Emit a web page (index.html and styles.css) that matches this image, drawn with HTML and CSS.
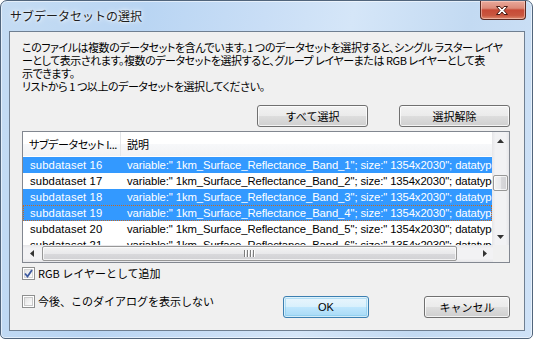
FILE: index.html
```html
<!DOCTYPE html>
<html lang="ja">
<head>
<meta charset="utf-8">
<title>サブデータセットの選択</title>
<link rel="stylesheet" href="styles.css">
</head>
<body>
<div class="window">
  <div class="titlebar">
    <span class="title">サブデータセットの選択</span>
    <div class="close">
      <svg width="46" height="19" viewBox="0 0 46 19">
        <path d="M17.5 5.5 L21 5.5 L23 8 L25 5.5 L28.5 5.5 L25 9.5 L28.5 13.5 L25 13.5 L23 11 L21 13.5 L17.5 13.5 L21 9.5 Z" fill="#ffffff" stroke="#4a1a12" stroke-width="1" stroke-linejoin="round"/>
      </svg>
    </div>
  </div>
  <div class="client">
    <p class="intro">このファイルは複数のデータセットを含んでいます。1 つのデータセットを選択すると、シングル ラスター レイヤ<br>ーとして表示されます。複数のデータセットを選択すると、グループ レイヤーまたは RGB レイヤーとして表<br>示できます。<br>リストから 1 つ以上のデータセットを選択してください。</p>
    <div class="top-buttons">
      <button class="btn wide">すべて選択</button>
      <button class="btn wide">選択解除</button>
    </div>
    <div class="list">
      <div class="list-main">
        <div class="list-view">
          <div class="header">
            <div class="hcell c1">サブデータセット I...</div>
            <div class="hcell c2">説明</div>
          </div>
          <div class="rows">
            <div class="row sel"><div class="cell c1">subdataset 16</div><div class="cell c2">variable:" 1km_Surface_Reflectance_Band_1"; size:" 1354x2030"; datatype</div></div>
            <div class="row"><div class="cell c1">subdataset 17</div><div class="cell c2">variable:" 1km_Surface_Reflectance_Band_2"; size:" 1354x2030"; datatype</div></div>
            <div class="row sel"><div class="cell c1">subdataset 18</div><div class="cell c2">variable:" 1km_Surface_Reflectance_Band_3"; size:" 1354x2030"; datatype</div></div>
            <div class="row sel focus"><div class="cell c1">subdataset 19</div><div class="cell c2">variable:" 1km_Surface_Reflectance_Band_4"; size:" 1354x2030"; datatype</div></div>
            <div class="row"><div class="cell c1">subdataset 20</div><div class="cell c2">variable:" 1km_Surface_Reflectance_Band_5"; size:" 1354x2030"; datatype</div></div>
            <div class="row"><div class="cell c1">subdataset 21</div><div class="cell c2">variable:" 1km_Surface_Reflectance_Band_6"; size:" 1354x2030"; datatype</div></div>
          </div>
        </div>
        <div class="vscroll">
          <div class="arrow up"><svg width="7" height="4" viewBox="0 0 7 4"><path d="M0 4 L3.5 0 L7 4 Z" fill="#333"/></svg></div>
          <div class="vtrack">
            <div class="vthumb"></div>
          </div>
          <div class="arrow down"><svg width="7" height="4" viewBox="0 0 7 4"><path d="M0 0 L7 0 L3.5 4 Z" fill="#333"/></svg></div>
        </div>
      </div>
      <div class="hscroll-row">
        <div class="hscroll">
          <div class="arrow left"><svg width="4" height="7" viewBox="0 0 4 7"><path d="M4 0 L4 7 L0 3.5 Z" fill="#333"/></svg></div>
          <div class="htrack">
            <div class="hthumb"><span class="grip"></span><span class="grip"></span><span class="grip"></span><span class="grip"></span></div>
          </div>
          <div class="arrow right"><svg width="4" height="7" viewBox="0 0 4 7"><path d="M0 0 L4 3.5 L0 7 Z" fill="#333"/></svg></div>
        </div>
        <div class="corner"></div>
      </div>
    </div>
    <div class="bottom">
      <label class="check first"><span class="box checked"><svg width="9" height="9" viewBox="0 0 9 9"><path d="M1 4.5 L3.5 7.5 L8 1" fill="none" stroke="#3d5aa0" stroke-width="1.8"/></svg></span>RGB レイヤーとして追加</label>
      <div class="last-row">
        <label class="check"><span class="box"></span>今後、このダイアログを表示しない</label>
        <button class="btn small default">OK</button>
        <button class="btn small">キャンセル</button>
      </div>
    </div>
  </div>
</div>
</body>
</html>
```

FILE: styles.css
```css
* { box-sizing: border-box; }

html, body {
  margin: 0;
  padding: 0;
  background: #ffffff;
}

body {
  width: 533px;
  height: 339px;
  font-family: "Noto Sans CJK JP", sans-serif;
  font-size: 11px;
  color: #000;
}

.window {
  width: 533px;
  height: 339px;
  border: 1px solid #51657c;
  border-radius: 7px 7px 5px 5px;
  background: linear-gradient(100deg, #c5dcf3 0%, #b9d5f3 25%, #c9def6 45%, #d5e6f8 60%, #c3daf2 80%, #cfe2f7 100%);
  padding: 0 7px 7px 8px;
  display: flex;
  flex-direction: column;
  box-shadow: inset 0 0 0 1px rgba(255,255,255,0.55);
}

.titlebar {
  height: 30px;
  display: flex;
  justify-content: space-between;
  align-items: flex-start;
}

.title {
  margin-top: 7px;
  margin-left: 1px;
  font-family: "Noto Sans CJK JP", sans-serif;
  font-size: 12px;
  line-height: 16px;
  color: #1e1e1e;
  text-shadow: 0 0 6px #ffffff, 0 0 3px #ffffff;
}

.close {
  width: 46px;
  height: 19px;
  margin-right: -1px;
  border: 1px solid #5a2a22;
  border-top: none;
  border-radius: 0 0 4px 4px;
  background: linear-gradient(#e9a99b 0%, #dc8a79 40%, #c74a36 50%, #c9563f 80%, #dd8a6e 100%);
  box-shadow: inset 0 0 0 1px rgba(255,220,210,0.5);
  display: flex;
  align-items: center;
  justify-content: center;
}

.close svg { display: block; margin-left: -2px; }

.client {
  flex: 1;
  background: #f0f0f0;
  border: 1px solid #6f7f91;
  padding: 9px 14px 0 12px;
  display: flex;
  flex-direction: column;
}

.intro {
  margin: 0;
  font-size: 11px;
  line-height: 13px;
  font-feature-settings: "palt";
  white-space: nowrap;
  letter-spacing: -0.45px;
}

.top-buttons {
  margin-top: 12px;
  display: flex;
  justify-content: flex-end;
  gap: 31px;
}

.btn {
  font-family: "Noto Sans CJK JP", sans-serif;
  font-size: 11px;
  color: #000;
  height: 22px;
  padding: 0;
  border: 1px solid #707070;
  border-radius: 3px;
  background: linear-gradient(#f2f2f2 0%, #ebebeb 48%, #dddddd 52%, #cfcfcf 100%);
  box-shadow: inset 0 0 0 1px rgba(255,255,255,0.75);
  line-height: 18px;
}

.btn.wide { width: 111px; }
.btn.small { width: 86px; }

.btn.default {
  border-color: #3c7fb1;
  background: linear-gradient(#eaf6fd 0%, #d9f0fc 48%, #bee6fd 52%, #a7d9f5 100%);
  box-shadow: inset 0 0 0 1px rgba(255,255,255,0.6), inset 0 0 0 2px rgba(124,199,236,0.5);
  font-family: "Liberation Sans", sans-serif;
}

.list {
  margin-top: 4px;
  width: 488px;
  height: 132px;
  border: 1px solid #828790;
  background: #ffffff;
  display: flex;
  flex-direction: column;
}

.list-main {
  flex: 1;
  display: flex;
  min-height: 0;
}

.list-view {
  flex: 1;
  overflow: hidden;
  min-width: 0;
}

.header {
  height: 25px;
  display: flex;
  background: linear-gradient(#ffffff 0%, #ffffff 50%, #f7f8fa 51%, #f1f2f4 100%);
  border-bottom: 1px solid #ffffff;
}

.hcell {
  font-family: "Noto Sans CJK JP", sans-serif;
  font-size: 11px;
  line-height: 24px;
  padding-left: 7px;
  white-space: nowrap;
  overflow: hidden;
  font-feature-settings: "palt";
}

.hcell.c1 {
  width: 98px;
  padding-left: 6px;
  letter-spacing: -0.4px;
  border-right: 1px solid #e3e5e8;
}

.hcell.c2 {
  flex: 1;
  padding-left: 6px;
}

.rows {
  display: flex;
  flex-direction: column;
}

.row {
  height: 16px;
  display: flex;
  font-family: "Liberation Sans", sans-serif;
  font-size: 11.3px;
  line-height: 16px;
  white-space: nowrap;
  flex-shrink: 0;
}

.row.sel {
  background: #3399ff;
  color: #ffffff;
}

.row.focus {
  outline: 1px dotted #c36a24;
  outline-offset: -1px;
}

.cell.c1 {
  width: 98px;
  padding-left: 7px;
  flex-shrink: 0;
  letter-spacing: 0.1px;
}

.cell.c2 {
  padding-left: 6px;
  letter-spacing: -0.1px;
}

.vscroll {
  width: 17px;
  display: flex;
  flex-direction: column;
  background: linear-gradient(90deg, #e6e6e9 0%, #f2f2f4 20%, #f2f2f4 80%, #e6e6e9 100%);
}

.arrow {
  width: 17px;
  height: 17px;
  display: flex;
  align-items: center;
  justify-content: center;
  flex-shrink: 0;
}

.arrow svg { display: block; }

.vtrack {
  flex: 1;
  padding-top: 26px;
  display: flex;
  flex-direction: column;
  align-items: center;
}

.vthumb {
  width: 15px;
  height: 16px;
  border: 1px solid #979797;
  border-radius: 2px;
  background: linear-gradient(90deg, #f3f3f3 0%, #e9e9eb 50%, #d9d9dc 51%, #d1d1d4 100%);
  box-shadow: inset 0 0 0 1px rgba(255,255,255,0.7);
}

.hscroll-row {
  height: 17px;
  display: flex;
}

.hscroll {
  flex: 1;
  display: flex;
  background: linear-gradient(#e6e6e9 0%, #f2f2f4 20%, #f2f2f4 80%, #e6e6e9 100%);
}

.htrack {
  flex: 1;
  padding: 1px 19px 0 2px;
  display: flex;
}

.hthumb {
  width: 415px;
  height: 15px;
  border: 1px solid #979797;
  border-radius: 2px;
  background: linear-gradient(#f3f3f3 0%, #e9e9eb 50%, #d9d9dc 51%, #d1d1d4 100%);
  box-shadow: inset 0 0 0 1px rgba(255,255,255,0.7);
  display: flex;
  justify-content: center;
  align-items: center;
  gap: 1px;
}

.grip {
  width: 1px;
  height: 7px;
  background: #7c7c7c;
  box-shadow: 1px 0 0 #ffffff;
  margin-right: 1px;
}

.corner {
  width: 17px;
  background: #f0f0f0;
}

.bottom {
  margin-top: 4px;
  display: flex;
  flex-direction: column;
}

.check {
  display: flex;
  align-items: center;
  font-family: "Noto Sans CJK JP", sans-serif;
  font-size: 11px;
  line-height: 13px;
  height: 13px;
  white-space: nowrap;
}

.box {
  width: 13px;
  height: 13px;
  border: 1px solid #8e8f8f;
  background: linear-gradient(135deg, #dcdcdc 0%, #f4f4f4 60%, #ffffff 100%);
  box-shadow: inset 0 0 0 1px #ffffff, inset 0 0 0 2px #c9c9c9;
  margin-right: 3px;
  flex-shrink: 0;
  display: flex;
  align-items: center;
  justify-content: center;
}

.box.checked {
  box-shadow: inset 0 0 0 1px #ffffff, inset 0 0 0 2px #d4d4d4;
}

.box svg { display: block; }

.last-row {
  margin-top: 16px;
  display: flex;
  align-items: flex-start;
}

.last-row .check {
  flex: 1;
  margin-top: -1px;
}

.last-row .btn.small + .btn.small {
  margin-left: 55px;
}
```
